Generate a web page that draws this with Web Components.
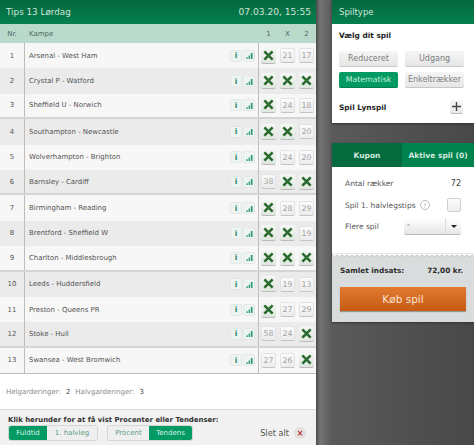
<!DOCTYPE html>
<html>
<head>
<meta charset="utf-8">
<title>Tips 13</title>
<style>
	html, body { margin: 0; height: 100%; }
	body {
		width: 474px;
		height: 445px;
		overflow: hidden;
		font-family: "DejaVu Sans", sans-serif;
		background: linear-gradient(90deg, #4a4a4a 316px, #757575 320px, #5a5a5a 332px, #484848 100%);
	}
	tips-app { width: 474px; height: 445px; }
</style>
</head>
<body>
<tips-app></tips-app>
<script>
const X_ICON = `<svg width="11" height="11" viewBox="0 0 12 12"><path d="M1.5 1.5L10.5 10.5M10.5 1.5L1.5 10.5" stroke="#2a6b2f" stroke-width="2.8" fill="none"/></svg>`;

class PickButton extends HTMLElement {
	constructor() {
		super();
		this.attachShadow({ mode: 'open' });
	}

	connectedCallback() {
		const value = this.getAttribute('value');
		const picked = value === 'x';
		this.shadowRoot.innerHTML = `
			<style>
				:host { display: flex; justify-content: center; align-items: center; }
				div {
					display: flex; justify-content: center; align-items: center;
					width: 13px; height: 13px;
					border: 1px solid #e2e2e2; border-bottom-color: #c4c4c4; border-radius: 2px;
					background: linear-gradient(#fbfbfb, #ececec);
					font-size: 7.8px; color: #a3a3a3;
				}
				div.picked { width: 15px; height: 15px; border: 0; border-bottom: 1px solid #bbb; background: linear-gradient(#f4f7f3, #dfe7df); }
			</style>
			<div class="${picked ? 'picked' : ''}">${picked ? X_ICON : value}</div>
		`;
	}
}
customElements.define('pick-button', PickButton);

class MiniButton extends HTMLElement {
	constructor() {
		super();
		this.attachShadow({ mode: 'open' });
	}

	connectedCallback() {
		const isInfo = this.getAttribute('kind') === 'info';
		this.shadowRoot.innerHTML = `
			<style>
				:host {
					display: flex; justify-content: center; align-items: center;
					box-sizing: border-box; width: 12px; height: 12px;
					border: 1px solid #e3e9e6; border-radius: 2px;
					background: #eef4f1;
					color: #1f8a62; font-size: 7.5px; font-weight: bold;
				}
			</style>
			${isInfo ? 'i' : `<svg width="7" height="7" viewBox="0 0 8 8"><path d="M0.5 6h1.5v2h-1.5zM3 4h1.5v4h-1.5zM5.5 1h2v7h-2z" fill="#2c9a70"/></svg>`}
		`;
	}
}
customElements.define('mini-button', MiniButton);

class MatchRow extends HTMLElement {
	constructor() {
		super();
		this.attachShadow({ mode: 'open' });
	}

	connectedCallback() {
		const picks = this.getAttribute('picks').split(' ');
		const nr = Number(this.getAttribute('nr'));
		this.shadowRoot.innerHTML = `
			<style>
				:host {
					display: grid;
					grid-template-columns: 24px 1fr 33px 57px;
					height: ${this.hasAttribute('sep') ? '23.4px' : '25.4px'};
					background: ${nr % 2 ? '#f7f7f7' : '#ebebeb'};
					border-bottom: ${this.hasAttribute('sep') ? '2px solid #d5d5d5' : '0'};
					font-size: 6.95px;
					color: #555;
				}
				.nr { display: flex; justify-content: center; align-items: center; }
				.name { display: flex; align-items: center; padding-left: 4px; border-left: 1px solid #bdbdbd; }
				.tools { display: flex; align-items: center; gap: 1px; padding-left: 4px; }
				.picks { display: grid; grid-template-columns: 19px 19px 19px; box-shadow: -1px 0 0 #bdbdbd; }
			</style>
			<div class="nr">${nr}</div>
			<div class="name"><slot></slot></div>
			<div class="tools"><mini-button kind="info"></mini-button><mini-button kind="stats"></mini-button></div>
			<div class="picks">${picks.map(p => `<pick-button value="${p}"></pick-button>`).join('')}</div>
		`;
	}
}
customElements.define('match-row', MatchRow);

class ToggleGroup extends HTMLElement {
	constructor() {
		super();
		this.attachShadow({ mode: 'open' });
	}

	connectedCallback() {
		const active = Number(this.getAttribute('active'));
		const widths = this.getAttribute('widths').split(' ');
		const items = this.getAttribute('items').split('|');
		this.shadowRoot.innerHTML = `
			<style>
				:host { display: inline-flex; height: 14px; border-radius: 2px; overflow: hidden; box-shadow: 0 0 0 1px #d6d6d6; font-size: 7px; }
				span { display: flex; justify-content: center; align-items: center; color: #5c9c82; background: #efefef; }
				span.on { background: #049a63; color: #d7f2e6; }
			</style>
			${items.map((t, i) => `<span style="width:${widths[i]}px" class="${i === active ? 'on' : ''}">${t}</span>`).join('')}
		`;
	}
}
customElements.define('toggle-group', ToggleGroup);

class MatchPanel extends HTMLElement {
	constructor() {
		super();
		this.attachShadow({ mode: 'open' });
		this.shadowRoot.innerHTML = `
			<style>
				:host { display: flex; flex-direction: column; width: 316px; height: 445px; background: #fff; }
				.title {
					display: flex; justify-content: space-between; align-items: center;
					height: 24px; padding: 0 5px 0 6px;
					background: linear-gradient(#05693e, #067f4e);
					color: #cfe6da; font-size: 8.8px;
				}
				.title span + span { font-size: 9.1px; }
				.head {
					display: grid; grid-template-columns: 24px 1fr 19px 19px 19px;
					align-items: center; height: 19px;
					background: #b9d9cb; color: #4f6a5e; font-size: 7px;
				}
				.head span { text-align: center; }
				.head .kampe { text-align: left; padding-left: 5px; }
				.info {
					display: flex; gap: 5px; align-items: center; height: 35px;
					padding-left: 6px; border-top: 1px solid #bdbdbd;
					font-size: 7px; color: #8a8a8a;
				}
				.info b { font-weight: normal; color: #444; margin-left: 5px; }
				.foot { flex: 1; background: #f1f1f1; border-top: 1px solid #d9d9d9; padding: 6px 8px 0; }
				.foot p { margin: 0 0 2px; font-size: 6.95px; font-weight: bold; color: #333; }
				.ctrl { display: flex; align-items: center; padding-left: 1px; }
				.ctrl toggle-group + toggle-group { margin-left: 11px; }
				.del { margin-left: auto; margin-right: 2px; display: flex; align-items: center; gap: 5px; font-size: 8.2px; color: #555; }
				.del i {
					display: flex; justify-content: center; align-items: center;
					width: 12px; height: 12px; border-radius: 50%;
					background: #e4e0e0; color: #b8323a; font: bold 8px "DejaVu Sans", sans-serif;
				}
			</style>
			<div class="title"><span>Tips 13 Lørdag</span><span>07.03.20, 15:55</span></div>
			<div class="head"><span>Nr.</span><span class="kampe">Kampe</span><span>1</span><span>X</span><span>2</span></div>
			<slot></slot>
			<div class="info"><span>Helgarderinger:<b>2</b></span><span>Halvgarderinger:<b>3</b></span></div>
			<div class="foot">
				<p>Klik herunder for at få vist Procenter eller Tendenser:</p>
				<div class="ctrl">
					<toggle-group items="Fuldtid|1. halvleg" widths="38 50" active="0"></toggle-group>
					<toggle-group items="Procent|Tendens" widths="41 43" active="1"></toggle-group>
					<div class="del">Slet alt <i>×</i></div>
				</div>
			</div>
		`;
	}
}
customElements.define('match-panel', MatchPanel);

class GameTypeCard extends HTMLElement {
	constructor() {
		super();
		this.attachShadow({ mode: 'open' });
		this.shadowRoot.innerHTML = `
			<style>
				:host { display: block; background: #fff; height: 123px; box-shadow: 0 1px 2px #333; }
				.title { height: 24px; display: flex; align-items: center; padding-left: 7px; background: linear-gradient(#05693e, #067f4e); color: #cfe6da; font-size: 8.5px; }
				.body { padding: 7px 10px 0 7px; color: #333; font-size: 7.4px; }
				b { display: block; color: #222; }
				.grid { display: grid; grid-template-columns: 59px 59px; column-gap: 7px; row-gap: 5px; margin-top: 11px; }
				.grid span {
					display: flex; justify-content: center; align-items: center; height: 15px;
					background: linear-gradient(#f5f5f5, #e6e6e6); border-bottom: 1px solid #c8c8c8;
					border-radius: 2px; color: #7d7d7d; font-size: 8px;
				}
				.grid span.on { background: #049a63; color: #c8efdd; border-bottom-color: #038052; font-size: 7.8px; }
				.lyn { display: flex; justify-content: space-between; align-items: center; margin-top: 12px; }
				.plus {
					display: flex; justify-content: center; align-items: center; width: 13px; height: 13px;
					background: linear-gradient(#f7f7f7, #e8e8e8); border-bottom: 1px solid #bbb;
					border-radius: 2px; margin-right: 1px;
				}
			</style>
			<div class="title">Spiltype</div>
			<div class="body">
				<b>Vælg dit spil</b>
				<div class="grid">
					<span>Reduceret</span><span>Udgang</span>
					<span class="on">Matematisk</span><span>Enkeltrækker</span>
				</div>
				<div class="lyn"><b>Spil Lynspil</b><span class="plus"><svg width="9" height="9" viewBox="0 0 9 9"><path d="M4.5 0v9M0 4.5h9" stroke="#444" stroke-width="1.4"/></svg></span></div>
			</div>
		`;
	}
}
customElements.define('game-type-card', GameTypeCard);

class CouponCard extends HTMLElement {
	constructor() {
		super();
		this.attachShadow({ mode: 'open' });
		this.shadowRoot.innerHTML = `
			<style>
				:host { display: block; margin-top: 20px; height: 179px; box-shadow: 0 1px 2px #333; font-size: 7.5px; color: #555; background: #d9dcdc; }
				.tabs { display: grid; grid-template-columns: 70px 72px; height: 24px; color: #d2eadf; font-weight: bold; font-size: 7.5px; }
				.tabs span { display: flex; justify-content: center; align-items: center; background: #00824f; }
				.tabs span:first-child { background: #056b3f; }
				.body { background: #fff; height: 86px; padding: 6px 13px 0; box-sizing: border-box; display: flex; flex-direction: column; }
				.line { display: flex; align-items: center; height: 21.5px; }
				.line .val { margin-left: auto; color: #444; font-size: 8px; }
				.help { display: inline-flex; justify-content: center; align-items: center; width: 8px; height: 8px; margin-left: 4px; border: 1px solid #bbb; border-radius: 50%; color: #aaa; font-size: 6px; }
				.check { margin-left: auto; width: 12px; height: 12px; border: 1px solid #d0d0d0; border-radius: 2px; background: linear-gradient(#fdfdfd, #eee); }
				.select {
					margin-left: auto; display: grid; grid-template-columns: 1fr 16px; width: 57px; height: 16px;
					background: linear-gradient(#fff, #e6e6e6); border-bottom: 1px solid #bbb; border-radius: 2px;
				}
				.select span { padding-left: 3px; line-height: 13px; color: #444; }
				.select i { display: flex; justify-content: center; align-items: center; border-left: 1px solid #ddd; }
				.select i::after { content: ''; border: 3px solid transparent; border-top-color: #222; border-bottom: 0; }
				svg { display: block; }
				.sum { height: 65px; padding: 9px 11px 0 8px; box-sizing: border-box; }
				.total { display: flex; justify-content: space-between; font-weight: bold; color: #2e2e2e; font-size: 7.3px; }
				.buy {
					display: flex; justify-content: center; align-items: center; height: 24px; width: 126px; margin-top: 12px;
					background: linear-gradient(#e27a30, #c65b14); box-shadow: 0 1px 1px #999; color: #f8e3d2; font-size: 10.5px;
				}
			</style>
			<div class="tabs"><span>Kupon</span><span>Aktive spil (0)</span></div>
			<div class="body">
				<div class="line">Antal rækker<span class="val">72</span></div>
				<div class="line">Spil 1. halvlegstips<span class="help">?</span><span class="check"></span></div>
				<div class="line">Flere spil<div class="select"><span>-</span><i></i></div></div>
			</div>
			<svg width="142" height="4" viewBox="0 0 142 4"><path d="M0 0v2${'q2.5 3 5 0'.repeat(29)}V0z" fill="#fff" stroke="#a8abab" stroke-width="0.6"/></svg>
			<div class="sum">
				<div class="total"><span>Samlet indsats:</span><span>72,00 kr.</span></div>
				<div class="buy">Køb spil</div>
			</div>
		`;
	}
}
customElements.define('coupon-card', CouponCard);

class TipsApp extends HTMLElement {
	constructor() {
		super();
		this.attachShadow({ mode: 'open' });
		const rows = [
			['Arsenal - West Ham', 'x 21 17'],
			['Crystal P - Watford', 'x x x'],
			['Sheffield U - Norwich', 'x 24 18'],
			['Southampton - Newcastle', 'x x 20'],
			['Wolverhampton - Brighton', 'x 24 20'],
			['Barnsley - Cardiff', '38 x x'],
			['Birmingham - Reading', 'x 28 29'],
			['Brentford - Sheffield W', 'x x 19'],
			['Charlton - Middlesbrough', 'x x x'],
			['Leeds - Huddersfield', 'x 19 13'],
			['Preston - Queens PR', 'x 27 29'],
			['Stoke - Hull', '58 24 x'],
			['Swansea - West Bromwich', '27 26 x']
		];
		this.shadowRoot.innerHTML = `
			<style>
				:host { display: flex; gap: 16px; }
				.side { width: 142px; }
			</style>
			<match-panel>
				${rows.map((r, i) => `<match-row nr="${i + 1}" picks="${r[1]}" ${(i + 1) % 3 === 0 ? 'sep' : ''}>${r[0]}</match-row>`).join('')}
			</match-panel>
			<div class="side">
				<game-type-card></game-type-card>
				<coupon-card></coupon-card>
			</div>
		`;
	}
}
customElements.define('tips-app', TipsApp);
</script>
</body>
</html>
